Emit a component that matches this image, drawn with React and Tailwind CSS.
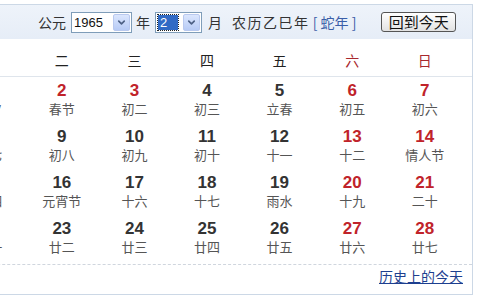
import { ChevronDown } from 'lucide-react';

const cjk = { fontFamily: '"Noto Sans CJK SC", "Liberation Sans", sans-serif' };
const num = { fontFamily: '"Liberation Sans", Arial, sans-serif' };

const weekdays = [
  { label: '一', red: false },
  { label: '二', red: false },
  { label: '三', red: false },
  { label: '四', red: false },
  { label: '五', red: false },
  { label: '六', red: true },
  { label: '日', red: true },
];

const rows = [
  [['1', '除夕'], ['2', '春节'], ['3', '初二'], ['4', '初三'], ['5', '立春'], ['6', '初五'], ['7', '初六']],
  [['8', '初七'], ['9', '初八'], ['10', '初九'], ['11', '初十'], ['12', '十一'], ['13', '十二'], ['14', '情人节']],
  [['15', '十四'], ['16', '元宵节'], ['17', '十六'], ['18', '十七'], ['19', '雨水'], ['20', '十九'], ['21', '二十']],
  [['22', '廿一'], ['23', '廿二'], ['24', '廿三'], ['25', '廿四'], ['26', '廿五'], ['27', '廿六'], ['28', '廿七']],
];

// red dates: weekends plus 春节 / 初二
const redDays = ['2', '3', '6', '7', '13', '14', '20', '21', '27', '28'];

function FakeSelect({ value, width, selected }) {
  return (
    <div className={`flex items-center h-[21px] ${width} border border-[#7f9db9] bg-white pl-[2px] pr-[1px]`}>
      <div className="flex-1 flex items-center">
        {selected ? (
          <span className="px-[2px] h-[15px] w-[20px] leading-[15px] text-[13px] text-white bg-[#316ac5] outline outline-1 outline-dotted outline-[#222]" style={num}>
            {value}
          </span>
        ) : (
          <span className="text-[13px] text-[#111] leading-[15px]" style={num}>{value}</span>
        )}
      </div>
      <div className="w-[17px] h-[17px] rounded-[2px] border border-[#b9c9ef] bg-gradient-to-b from-[#dbe6fd] to-[#b7cbf6] flex items-center justify-center">
        <ChevronDown className="w-[11px] h-[11px] text-[#4d6185]" strokeWidth={3.5} />
      </div>
    </div>
  );
}

export default function App() {
  return (
    <div className="w-[480px] h-[300px] bg-white overflow-hidden" style={cjk}>
      <div className="mt-[4px] ml-[-59px] w-[532px] h-[291px] border border-[#ccd8e6] flex flex-col">

        {/* Header */}
        <div className="h-[34px] shrink-0 bg-gradient-to-b from-[#eef3fa] to-[#e6edf7] flex items-center text-[14px] text-[#333]">
          <span className="ml-[96px]">公元</span>
          <div className="ml-[5px]"><FakeSelect value="1965" width="w-[61px]" /></div>
          <span className="ml-[4px]">年</span>
          <div className="ml-[5px]"><FakeSelect value="2" width="w-[47px]" selected /></div>
          <span className="ml-[6px]">月</span>
          <span className="ml-[10px] tracking-[1.5px]">
            农历乙巳年<span className="text-[#3a5ea8] tracking-normal"> [ 蛇年 ]</span>
          </span>
          <button className="ml-[25px] h-[20px] w-[75px] rounded-[3px] border border-[#555] bg-gradient-to-b from-white to-[#e2e2e2] text-[15px] leading-[16px] text-[#111]">
            回到今天
          </button>
        </div>

        {/* Weekdays */}
        <div className="grid grid-cols-7 px-[11px] h-[38px] shrink-0 border-b border-[#dfe5ec]">
          {weekdays.map((w) => (
            <div key={w.label} className={`text-center text-[14px] leading-[20px] pt-[11px] ${w.red ? 'text-[#a8282d]' : 'text-[#222]'}`}>
              {w.label}
            </div>
          ))}
        </div>

        {/* Dates */}
        <div className="px-[11px]">
          {rows.map((row, i) => (
            <div key={i} className="grid grid-cols-7 h-[46px]">
              {row.map(([d, l]) => (
                <div key={d} className="flex flex-col items-center pt-[5px]">
                  <span className={`text-[17px] font-bold leading-[18px] ${redDays.includes(d) ? 'text-[#c0232a]' : 'text-[#333]'}`} style={num}>
                    {d}
                  </span>
                  <span className="text-[13px] leading-[18px] text-[#555]">{l}</span>
                </div>
              ))}
            </div>
          ))}
        </div>

        <div className="mt-[3px] border-t border-dashed border-[#d0d6de]" />

        {/* Footer */}
        <div className="flex justify-end pr-[9px] pt-[1px]">
          <a href="#" className="text-[14px] leading-[20px] text-[#1d3f8f] underline">历史上的今天</a>
        </div>
      </div>
    </div>
  );
}
